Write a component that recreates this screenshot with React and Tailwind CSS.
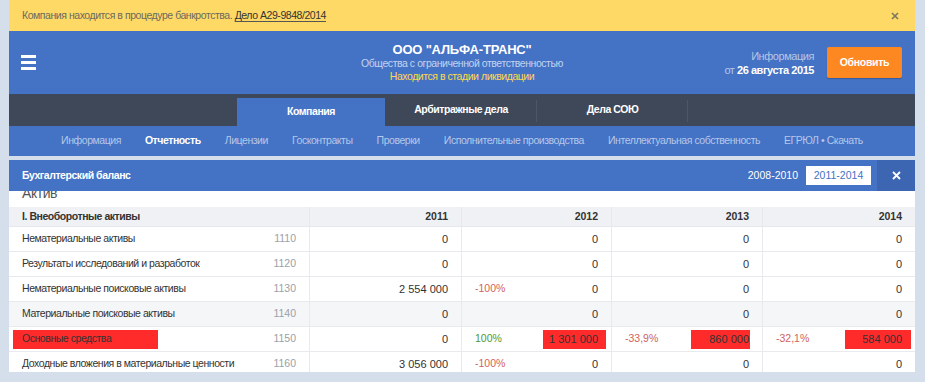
import React from 'react';

const RED = 'bg-[#ff2b2b]';

const rows = [
    {
        name: 'Нематериальные активы',
        code: '1110',
        cells: [{ n: '0' }, { n: '0' }, { n: '0' }, { n: '0' }],
    },
    {
        name: 'Результаты исследований и разработок',
        code: '1120',
        cells: [{ n: '0' }, { n: '0' }, { n: '0' }, { n: '0' }],
    },
    {
        name: 'Нематериальные поисковые активы',
        code: '1130',
        cells: [{ n: '2 554 000' }, { n: '0', pct: '-100%', down: true }, { n: '0' }, { n: '0' }],
    },
    {
        name: 'Материальные поисковые активы',
        code: '1140',
        gray: true,
        cells: [{ n: '0' }, { n: '0' }, { n: '0' }, { n: '0' }],
    },
    {
        name: 'Основные средства',
        code: '1150',
        mark: true,
        cells: [
            { n: '0' },
            { n: '1 301 000', pct: '100%', box: 'pl-[6px] pr-[8px] -mr-[8px]' },
            { n: '860 000', pct: '-33,9%', down: true, box: 'pl-[18px] pr-[1px] -mr-[1px]' },
            { n: '584 000', pct: '-32,1%', down: true, box: 'pl-[17px] pr-[9px] -mr-[9px]' },
        ],
    },
    {
        name: 'Доходные вложения в материальные ценности',
        code: '1160',
        cells: [{ n: '3 056 000' }, { n: '0', pct: '-100%', down: true }, { n: '0' }, { n: '0' }],
    },
];

const subnav = [
    'Информация',
    'Отчетность',
    'Лицензии',
    'Госконтракты',
    'Проверки',
    'Исполнительные производства',
    'Интеллектуальная собственность',
    'ЕГРЮЛ • Скачать',
];

const App = () => {
    return (
        <div className="h-[382px] overflow-hidden bg-[#d5dfeb] pl-[9px] pr-[10px] font-['Liberation_Sans',Arial,sans-serif] text-[10.5px] tracking-[-0.45px] text-[#333]">
            {/* bankruptcy notice */}
            <div className="h-[31px] bg-[#fed966] flex items-center justify-between pl-[13px] pr-[16px]">
                <div className="text-[#6b6a5e]">
                    Компания находится в процедуре банкротства.{' '}
                    <span className="text-[#333] underline underline-offset-2 decoration-[#555]">Дело А29-9848/2014</span>
                </div>
                <svg width="8" height="8" viewBox="0 0 8 8" className="text-[#7a7560]">
                    <path d="M1 1L7 7M7 1L1 7" stroke="currentColor" strokeWidth="1.6" />
                </svg>
            </div>

            {/* company header */}
            <div className="h-[63px] bg-[#4472c4] grid grid-cols-[1fr_auto_1fr]">
                <div className="flex items-center pl-[12px]">
                    <div className="flex flex-col gap-[3px]">
                        <span className="block w-[15px] h-[3px] bg-white" />
                        <span className="block w-[15px] h-[3px] bg-white" />
                        <span className="block w-[15px] h-[3px] bg-white" />
                    </div>
                </div>
                <div className="pt-[11px] text-center leading-[13px]">
                    <div className="text-[13px] font-bold text-white leading-[15px] tracking-[-0.2px]">ООО "АЛЬФА-ТРАНС"</div>
                    <div className="text-[#c3d3ef]">Общества с ограниченной ответственностью</div>
                    <div className="text-[#ffd84d]">Находится в стадии ликвидации</div>
                </div>
                <div className="flex items-center justify-end pr-[13px] gap-[13px]">
                    <div className="text-right leading-[14px] text-[11px] text-[#b4c7e8]">
                        <div>Информация</div>
                        <div>
                            от <span className="font-bold text-white">26 августа 2015</span>
                        </div>
                    </div>
                    <button className="h-[31px] w-[75px] rounded-[2px] bg-[#fd8822] text-white font-bold tracking-[-0.3px] shadow-[0_1px_1px_rgba(0,0,0,0.2)]">
                        Обновить
                    </button>
                </div>
            </div>

            {/* main tabs */}
            <div className="h-[32px] bg-[#3f4859] flex items-end pl-[228px]">
                <div className="h-[28px] w-[148px] bg-[#4472c4] flex items-center justify-center font-bold text-white">
                    Компания
                </div>
                <div className="h-[32px] w-[152px] flex items-center justify-center font-bold text-white relative">
                    Арбитражные дела
                    <span className="absolute right-0 top-[6px] h-[22px] w-px bg-[#4c5669]" />
                </div>
                <div className="h-[32px] w-[151px] flex items-center justify-center font-bold text-white relative">
                    Дела СОЮ
                    <span className="absolute right-0 top-[6px] h-[22px] w-px bg-[#4c5669]" />
                </div>
            </div>

            {/* sub navigation */}
            <div className="h-[30px] bg-[#4472c4] flex items-center justify-center gap-[24px]">
                {subnav.map((item) => (
                    <span key={item} className={item === 'Отчетность' ? 'font-bold text-white' : 'text-[#b5c8ea]'}>
                        {item}
                    </span>
                ))}
            </div>

            {/* balance panel */}
            <div className="mt-[4px]">
                <div className="h-[31px] bg-[#4472c4] flex items-center">
                    <div className="flex-1 pl-[13px] font-bold text-white">Бухгалтерский баланс</div>
                    <span className="text-white mr-[8px] tracking-normal">2008-2010</span>
                    <span className="h-[19px] w-[65px] bg-white text-[#4472c4] flex items-center justify-center mr-[6px] tracking-normal">
                        2011-2014
                    </span>
                    <div className="h-[31px] w-[38px] bg-[#3c66b1] flex items-center justify-center">
                        <svg width="9" height="9" viewBox="0 0 9 9">
                            <path d="M1 1L8 8M8 1L1 8" stroke="white" strokeWidth="1.8" />
                        </svg>
                    </div>
                </div>

                <div className="h-[181px] overflow-hidden bg-white">
                    <div className="h-[16px] overflow-hidden pl-[13px]">
                        <div className="-mt-[6px] text-[14px] leading-[16px] text-[#555]">Актив</div>
                    </div>

                    <div className="grid grid-cols-[301px_152px_150px_151px_152px] h-[20px] bg-[#f0f1f4] border-b border-[#e6e8ec] font-bold">
                        <div className="flex items-center pl-[13px] border-r border-[#e6e8ec]">I. Внеоборотные активы</div>
                        <div className="flex items-center justify-end pr-[13px] border-r border-[#e6e8ec] tracking-normal">2011</div>
                        <div className="flex items-center justify-end pr-[13px] border-r border-[#e6e8ec] tracking-normal">2012</div>
                        <div className="flex items-center justify-end pr-[13px] border-r border-[#e6e8ec] tracking-normal">2013</div>
                        <div className="flex items-center justify-end pr-[13px] tracking-normal">2014</div>
                    </div>

                    {rows.map((row) => (
                        <div
                            key={row.code}
                            className={`grid grid-cols-[301px_152px_150px_151px_152px] h-[25px] border-b border-[#e8eaee] ${row.gray ? 'bg-[#f5f6f8]' : 'bg-white'}`}
                        >
                            <div className="flex items-center pl-[4px] pr-[13px] border-r border-[#e8eaee]">
                                <span className={`h-[19px] flex items-center pl-[9px] ${row.mark ? `${RED} w-[145px]` : ''}`}>
                                    {row.name}
                                </span>
                                <span className="ml-auto text-[#9aa0a8] tracking-normal">{row.code}</span>
                            </div>
                            {row.cells.map((c, i) => (
                                <div
                                    key={i}
                                    className={`flex items-center pl-[13px] pr-[13px] text-[11px] tracking-normal ${i < 3 ? 'border-r border-[#e8eaee]' : ''}`}
                                >
                                    {c.pct && (
                                        <span className={`text-[10.5px] ${c.down ? 'text-[#d0645e]' : 'text-[#4f9a30]'}`}>{c.pct}</span>
                                    )}
                                    <span className={`ml-auto h-[19px] flex items-center ${c.box ? `${RED} ${c.box}` : ''}`}>
                                        {c.n}
                                    </span>
                                </div>
                            ))}
                        </div>
                    ))}
                </div>
            </div>
        </div>
    );
};

export default App;
